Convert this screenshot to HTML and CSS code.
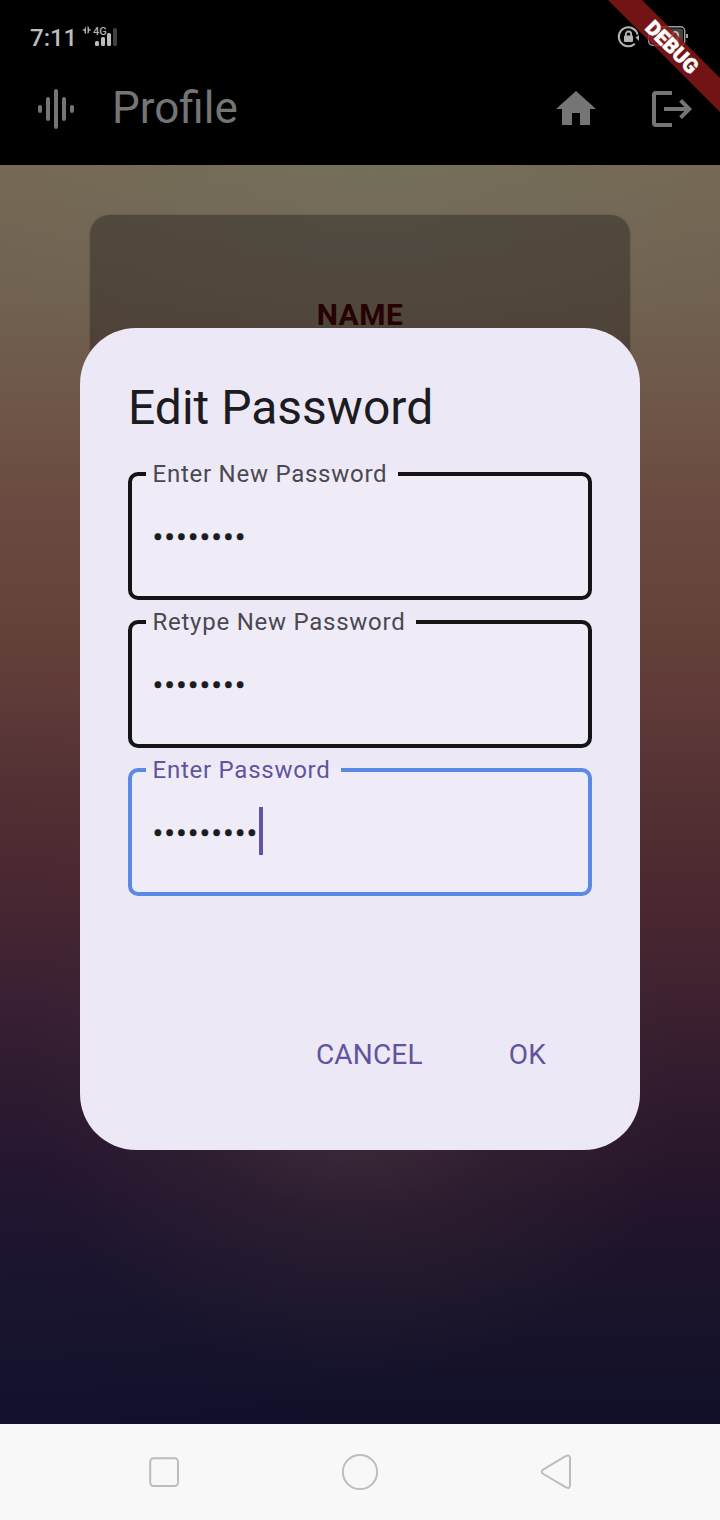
FILE: index.html
```html
<!DOCTYPE html>
<html lang="en">
<head>
<meta charset="utf-8">
<title>Profile</title>
<link rel="stylesheet" href="styles.css">
</head>
<body>
<div class="phone">
  <header class="top">
    <div class="status">
      <span class="clock">7:11</span>
      <svg class="signal" width="38" height="24" viewBox="81 24 38 24">
        <path d="M86 26v8l-1.500-1v-2L82 30l2.500-1zM87.500 26l1.500 1.500V29l2.500 1-2.500 1v1.500L87.500 34z" fill="#b0b0b0"/>
        <text class="net" x="93" y="35">4G</text>
        <g fill="#bdbdbd"><rect x="95" y="41" width="4" height="5" rx="1.500"/><rect x="101" y="37" width="4" height="9" rx="1.500"/><rect x="107" y="33" width="4" height="13" rx="1.500"/></g>
        <rect x="113" y="28" width="4" height="18" rx="1.500" fill="#404040"/>
      </svg>
      <svg class="battery" width="74" height="26" viewBox="616 24 74 26">
        <path d="M634.800 43.700A9.500 9.500 0 1 1 637.500 34.500" fill="none" stroke="#b5b5b5" stroke-width="2"/>
        <path d="M635.500 37.500l3.500-2.500v6z" fill="#b5b5b5"/>
        <rect x="624" y="35.500" width="9" height="6.500" rx="1" fill="#b5b5b5"/>
        <path d="M625.800 36v-1.800a2.700 2.700 0 0 1 5.400 0v1.800" fill="none" stroke="#b5b5b5" stroke-width="1.800"/>
        <rect x="648.700" y="26.700" width="36" height="18.600" rx="4" fill="#000" stroke="#a0a0a0" stroke-width="1.400"/>
        <rect x="650.500" y="28.500" width="32.500" height="15" rx="2.500" fill="#444"/>
        <text class="level" x="653" y="42">100</text>
        <rect x="686" y="34" width="2" height="4" fill="#a0a0a0"/>
      </svg>
    </div>
    <div class="appbar">
      <svg class="wave" width="48" height="48" viewBox="0 0 24 24"><path d="M4 11v2M8 7v10M12 3v18M16 7v10M20 11v2"/></svg>
      <h1 class="page-title">Profile</h1>
      <svg class="icon" width="48" height="48" viewBox="0 0 24 24"><path d="M10 20v-6h4v6h5v-8h3L12 3 2 12h3v8z"/></svg>
      <svg class="logout" width="48" height="48" viewBox="0 0 24 24"><path d="M12 4H4q-1 0-1 1v14q0 1 1 1h8M8 12h12.500M16.300 7.700l4.300 4.300-4.300 4.300"/></svg>
    </div>
    <div class="ribbon">DEBUG</div>
  </header>
  <main class="content">
    <section class="card"><h2 class="name">NAME</h2></section>
    <div class="dialog">
      <h2 class="title">Edit Password</h2>
      <div class="fields">
        <fieldset class="field"><legend>Enter New Password</legend><div class="entry"><span class="dots">••••••••</span></div></fieldset>
        <fieldset class="field"><legend>Retype New Password</legend><div class="entry"><span class="dots">••••••••</span></div></fieldset>
        <fieldset class="field focused"><legend>Enter Password</legend><div class="entry"><span class="dots">•••••••••</span><i class="caret"></i></div></fieldset>
      </div>
      <div class="actions"><span>CANCEL</span><span>OK</span></div>
    </div>
  </main>
  <nav class="nav">
    <svg width="40" height="40" viewBox="0 0 40 40"><rect x="6.200" y="6.200" width="27.800" height="27.800" rx="3.500"/></svg>
    <svg width="40" height="40" viewBox="0 0 40 40"><circle cx="20" cy="20" r="17.100"/></svg>
    <svg width="40" height="40" viewBox="0 0 40 40"><path d="M7.500 17.400L29.500 4.200Q34 2 34 6.400V33Q34 37.400 29.500 35.200L7.500 22Q4 19.700 7.500 17.400Z"/></svg>
  </nav>
</div>
</body>
</html>
```
FILE: styles.css
```css
* { box-sizing: border-box; }
body { margin: 0; font-family: Roboto, "Liberation Sans", sans-serif; }
h1, h2 { margin: 0; font-weight: 400; }
.phone { position: relative; display: flex; flex-direction: column; width: 720px; height: 1520px; overflow: hidden; }
.top { position: relative; height: 165px; background: #000; overflow: hidden; }
.status { display: flex; align-items: center; height: 74px; padding: 0 30px; }
.clock { width: 51px; font-size: 24px; font-weight: 500; line-height: 30px; color: #bdbdbd; padding-top: 2px; }
.signal { margin-top: -2px; }
.net { font-size: 11px; font-weight: 500; fill: #b0b0b0; }
.battery { margin-left: auto; }
.level { font-size: 15.500px; font-weight: 700; fill: #bbb; }
.appbar { display: flex; align-items: center; height: 70px; padding: 0 24px 0 32px; }
.wave { fill: none; stroke: #757575; stroke-width: 2; stroke-linecap: round; }
.icon { fill: #757575; }
.logout { margin-left: 48px; fill: none; stroke: #757575; stroke-width: 2; }
.page-title { flex: 1; margin-left: 32px; font-size: 44px; line-height: 52px; color: #757575; margin-top: -3px; }
.ribbon { position: absolute; left: 562px; top: 35px; width: 220px; height: 24px; background: rgba(143,24,26,.8); color: #fff; font-size: 20.400px; font-weight: 900; line-height: 24px; text-align: center; transform: rotate(45deg); -webkit-text-stroke: 0.500px #fff; }
.content { position: relative; height: 1259px; padding: 50px 90px 0; background:
  radial-gradient(ellipse 330px 310px at 355px 905px, rgba(76,58,64,.7), rgba(66,50,58,.28) 50%, rgba(60,45,55,0)),
  radial-gradient(ellipse 400px 240px at 370px 0, rgba(114,113,93,.7), rgba(114,113,93,0)),
  radial-gradient(ellipse 450px 600px at 0 1100px, rgba(22,22,72,.18), rgba(22,22,72,0)),
  linear-gradient(180deg, #766955 0, #706150 10.700%, #6f5748 18.700%, #6a4b41 26.600%, #66433b 34.500%, #5f3a38 42.500%, #533032 50.400%, #4b2830 58.400%, #3e2130 66.300%, #321c2d 72.300%, #2a172c 78.200%, #23152b 82.200%, #1a142a 90%, #10102a 100%); }
.card { height: 240px; padding-top: 83px; border-radius: 20px; background: rgba(27,22,24,.38); box-shadow: 0 0 2px rgba(25,20,22,.3); text-align: center; }
.name { font-size: 30px; font-weight: 700; line-height: 34px; letter-spacing: 0.5px; color: #260203; }
.dialog { position: absolute; left: 80px; top: 162.500px; width: 560px; height: 822px; padding: 48px; border-radius: 56px; background: #ece8f5; }
.title { font-size: 48px; line-height: 64px; color: #1c1b1f; white-space: nowrap; }
.fields { display: flex; flex-direction: column; gap: 20px; margin-top: 32.500px; }
.field { height: 128px; margin: 0; min-width: 0; padding: 0 22px 0 14px; border: 4px solid #141416; border-radius: 10px; background: #efecf7; }
.field legend { height: 4px; padding: 0 10.500px 0 6.500px; font-size: 24px; line-height: 4px; letter-spacing: 0.750px; color: #4b4852; white-space: nowrap; }
.entry { display: flex; align-items: center; padding-top: 35px; }
.dots { margin: 2px 0 0 6.500px; font-size: 32px; line-height: 48px; letter-spacing: 0.950px; color: #1c1b1f; -webkit-text-stroke: 0.300px #1c1b1f; }
.focused { border-color: #5b89e6; }
.focused legend { color: #62539f; }
.caret { width: 4px; height: 48px; margin: -2px 0 0 1px; background: #6254a0; }
.actions { display: flex; justify-content: flex-end; gap: 86px; margin-top: 142px; padding-right: 46px; font-size: 28px; line-height: 34px; letter-spacing: 0.200px; color: #62539f; }
.nav { display: flex; justify-content: space-between; align-items: center; height: 96px; padding: 0 144px; background: #f8f8f8; }
.nav svg { fill: none; stroke: #bdbdbd; stroke-width: 2; }
```
